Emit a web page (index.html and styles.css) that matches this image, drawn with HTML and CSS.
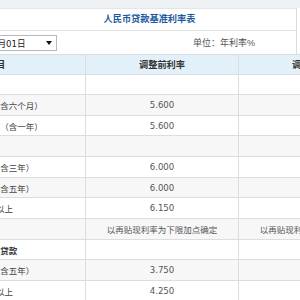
FILE: index.html
```html
<!DOCTYPE html>
<html lang="zh">
<head>
<meta charset="utf-8">
<link rel="stylesheet" href="styles.css">
</head>
<body>
<div class="page">
  <div class="head">
    <div class="title">人民币贷款基准利率表</div>
    <div class="toolbar">
      <div class="select"><span class="sel-text">2015年06月01日</span><span class="arrow"></span></div>
      <div class="unit">单位：年利率%</div>
    </div>
  </div>
  <div class="table">
    <div class="row thead"><div class="c1">项目</div><div class="c2">调整前利率</div><div class="c3">调整后利率</div></div>
    <div class="row"><div class="c1 cat">一、短期贷款</div><div class="c2"></div><div class="c3"></div></div>
    <div class="row alt"><div class="c1">六个月以内（含六个月）</div><div class="c2 num">5.600</div><div class="c3 num">5.350</div></div>
    <div class="row"><div class="c1">六个月至一年（含一年）</div><div class="c2 num">5.600</div><div class="c3 num">5.350</div></div>
    <div class="row alt"><div class="c1 cat">二、中长期贷款</div><div class="c2"></div><div class="c3"></div></div>
    <div class="row"><div class="c1">一至三年（含三年）</div><div class="c2 num">6.000</div><div class="c3 num">5.750</div></div>
    <div class="row alt"><div class="c1">三至五年（含五年）</div><div class="c2 num">6.000</div><div class="c3 num">5.750</div></div>
    <div class="row"><div class="c1">五年以上</div><div class="c2 num">6.150</div><div class="c3 num">5.900</div></div>
    <div class="row alt"><div class="c1 cat">三、贴现</div><div class="c2">以再贴现利率为下限加点确定</div><div class="c3">以再贴现利率为下限加点确定</div></div>
    <div class="row"><div class="c1 bold">公积金贷款</div><div class="c2"></div><div class="c3"></div></div>
    <div class="row alt"><div class="c1">五年以下（含五年）</div><div class="c2 num">3.750</div><div class="c3 num">3.500</div></div>
    <div class="row"><div class="c1">五年以上</div><div class="c2 num">4.250</div><div class="c3 num">4.000</div></div>
  </div>
</div>
</body>
</html>
```
FILE: styles.css
```css
html, body {
  margin: 0;
  padding: 0;
  overflow: hidden;
  background: #eef1f4;
}
body {
  font-family: "Liberation Sans", "Noto Sans CJK SC", sans-serif;
  font-size: 8.5px;
  color: #444;
}
.page {
  margin-top: 8px;
  margin-left: -93px;
  width: 486px;
  background: #fff;
}
.head {
  width: 389px;
  border-right: 1px solid #d6dbe0;
  border-top: 1px solid #e2e6ea;
}
.title {
  height: 21px;
  line-height: 20px;
  padding-left: 96px;
  text-align: center;
  font-size: 9.2px;
  font-weight: bold;
  color: #1d5aa0;
  border-bottom: 1px solid #e3e3e3;
}
.toolbar {
  display: flex;
  align-items: center;
  justify-content: space-between;
  height: 23px;
  padding-right: 41px;
}
.select {
  margin-left: 45px;
  width: 96px;
  height: 14px;
  border: 1px solid #b8b8b8;
  display: flex;
  align-items: center;
  justify-content: space-between;
  padding: 0 4px 0 3px;
  box-sizing: content-box;
  font-family: "DejaVu Sans", "Noto Sans CJK SC", sans-serif;
  font-size: 8.6px;
  color: #222;
}
.arrow {
  width: 0;
  height: 0;
  border-left: 3px solid transparent;
  border-right: 3px solid transparent;
  border-top: 4px solid #111;
}
.unit {
  font-size: 9px;
  color: #555;
}
.table {
  border-top: 1px solid #dcdcdc;
}
.row {
  display: grid;
  grid-template-columns: 179px 153px 153px;
  height: 19.66px;
  border-bottom: 1px solid #dddddd;
}
.row > div {
  display: flex;
  align-items: center;
  justify-content: center;
  white-space: nowrap;
  border-right: 1px solid #dddddd;
}
.row .c2, .row .c3 {
  color: #555;
}
.row .num {
  font-family: "DejaVu Sans", sans-serif;
  font-size: 8.6px;
}
.row.alt {
  background: #f7f7f7;
}
.thead {
  height: 18.5px;
  background: #e2f0fa;
  font-weight: bold;
  font-size: 9.2px;
}
.thead > div, .thead .c2, .thead .c3 {
  color: #333;
}
.row .cat {
  justify-content: flex-start;
  padding-left: 6px;
  font-weight: bold;
  color: #333;
}
.row .bold {
  font-weight: bold;
  color: #333;
}
```
